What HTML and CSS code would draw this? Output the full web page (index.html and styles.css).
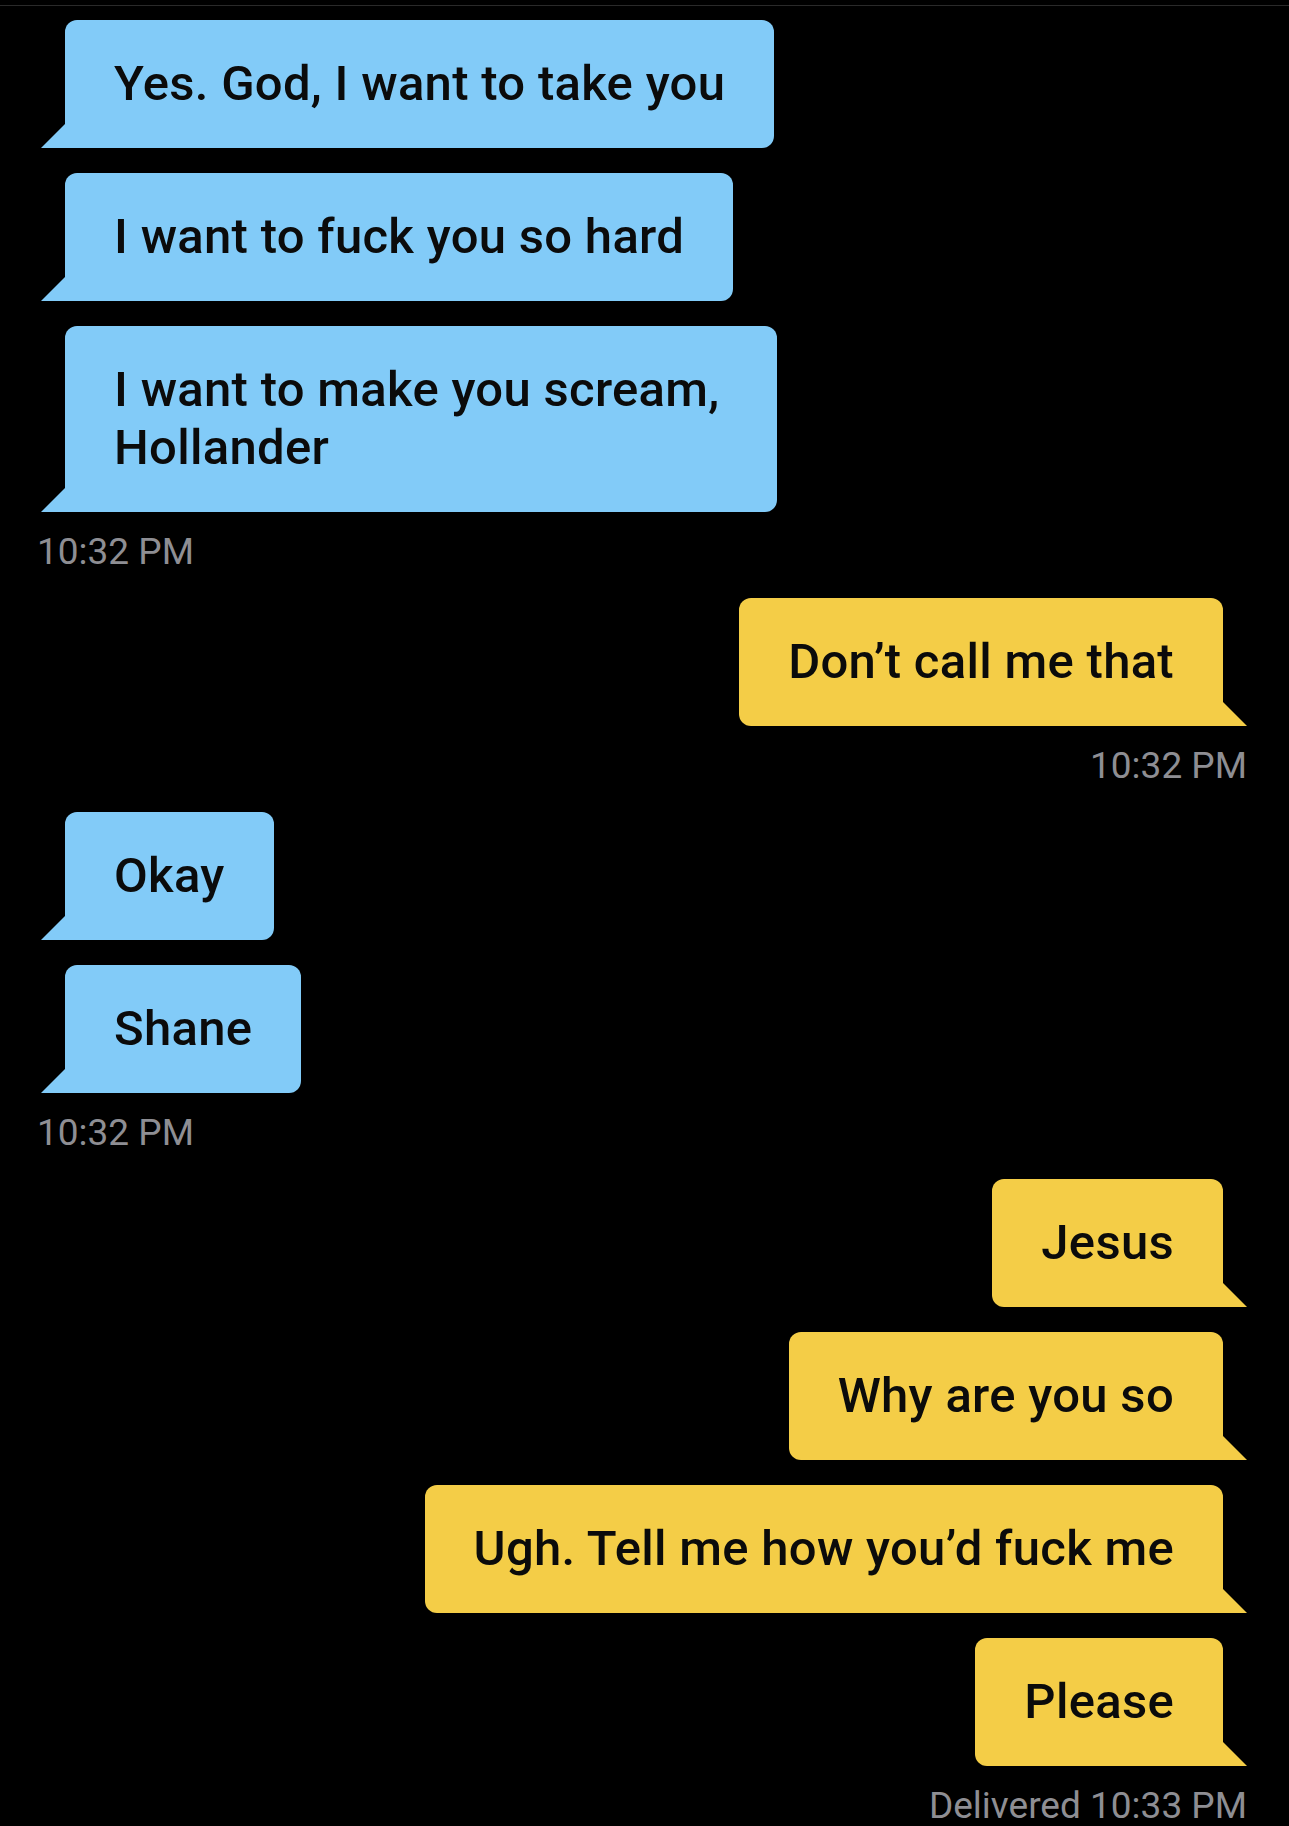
FILE: index.html
```html
<!DOCTYPE html>
<html lang="en">
<head>
    <meta charset="UTF-8">
    <meta name="viewport" content="width=device-width, initial-scale=1.0">
    <title>Messages</title>
    <link rel="stylesheet" href="styles.css">
</head>
<body>
    <div class="top-rule"></div>
    <div class="thread">
        <div class="msg msg-in">Yes. God, I want to take you</div>
        <div class="msg msg-in">I want to fuck you so hard</div>
        <div class="msg msg-in msg-narrow">I want to make you scream, Hollander</div>
        <div class="stamp stamp-in">10:32 PM</div>

        <div class="msg msg-out">Don’t call me that</div>
        <div class="stamp stamp-out">10:32 PM</div>

        <div class="msg msg-in">Okay</div>
        <div class="msg msg-in">Shane</div>
        <div class="stamp stamp-in">10:32 PM</div>

        <div class="msg msg-out">Jesus</div>
        <div class="msg msg-out">Why are you so</div>
        <div class="msg msg-out">Ugh. Tell me how you’d fuck me</div>
        <div class="msg msg-out">Please</div>
        <div class="stamp stamp-out">Delivered 10:33 PM</div>
    </div>
</body>
</html>
```

FILE: styles.css
```css
html {
    background-color: #000;
}

body {
    font-family: Roboto, "Noto Sans", Arial, sans-serif;
    background-color: #000;
    color: #0b0b0b;
    margin: 0;
    padding: 0;
    min-height: 1826px;
}

.top-rule {
    margin-top: 5px;
    border-top: 1px solid #2a2a2a;
}

.thread {
    display: flex;
    flex-direction: column;
    padding: 14px 42px 0 40px;
}

.msg {
    position: relative;
    box-sizing: border-box;
    max-width: 840px;
    padding: 35px 49px;
    border-radius: 12px;
    font-size: 49px;
    font-weight: 500;
    letter-spacing: 0.3px;
    line-height: 58px;
}

/* this one wraps after "scream," in the app */
.msg-narrow {
    max-width: 712px;
}

.msg + .msg {
    margin-top: 25px;
}

.msg::after {
    content: "";
    position: absolute;
    bottom: 0;
    width: 24px;
    height: 24px;
}

.msg-in {
    align-self: flex-start;
    margin-left: 25px;
    background-color: #82cbf8;
    border-bottom-left-radius: 0;
}

.msg-in::after {
    left: -24px;
    background-color: #82cbf8;
    clip-path: polygon(100% 0, 100% 100%, 0 100%);
}

.msg-out {
    align-self: flex-end;
    margin-right: 24px;
    background-color: #f4cd47;
    border-bottom-right-radius: 0;
}

.msg-out::after {
    right: -24px;
    background-color: #f4cd47;
    clip-path: polygon(0 0, 100% 100%, 0 100%);
}

.stamp {
    margin: 19px 0 25px;
    font-size: 37px;
    line-height: 42px;
    color: #8e8e93;
}

.stamp-in {
    align-self: flex-start;
    margin-left: -3px;
}

.stamp-out {
    align-self: flex-end;
}
```
